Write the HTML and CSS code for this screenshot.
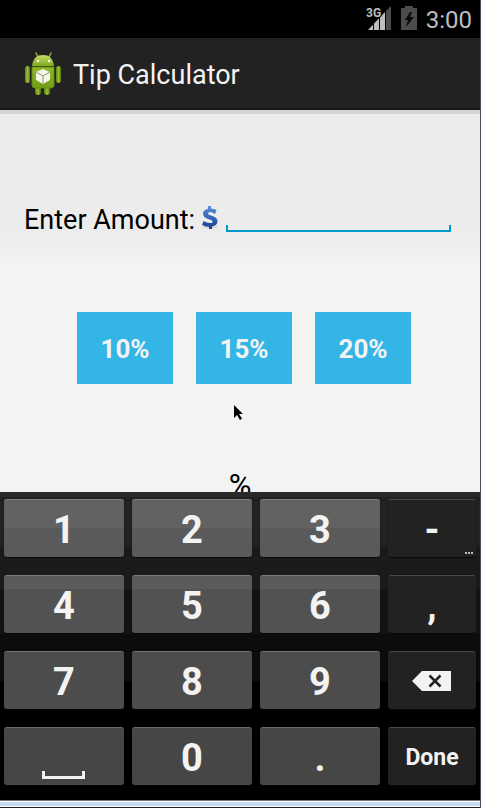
FILE: index.html
```html
<!DOCTYPE html>
<html lang="en">
<head>
<meta charset="utf-8">
<meta name="viewport" content="width=device-width, initial-scale=1">
<title>Tip Calculator</title>
<link rel="stylesheet" href="styles.css">
</head>
<body>
<div class="device">
  <div class="status">
    <svg class="signal" width="26" height="24" viewBox="0 0 26 24" aria-hidden="true">
      <path d="M25 0V24H19V6z" fill="#4c4c4c"/>
      <path d="M2 24L19 6V24z" fill="#bebebe"/>
      <path d="M7.500 17V24M13.500 11V24M19.500 5V24" stroke="#000" stroke-width="1"/>
      <text class="network" x="0" y="11">3G</text>
    </svg>
    <svg class="battery" width="16" height="24" viewBox="0 0 16 24" aria-hidden="true">
      <path d="M4 0H12V2H16V24H0V2H4z" fill="#4c4c4c"/>
      <path d="M9 6L4 14H7L5 21L13 11H9L11 6z" fill="#080808"/>
    </svg>
    <span class="clock">3:00</span>
  </div>
  <header class="appbar">
    <svg width="38" height="44" viewBox="0 0 38 44" aria-hidden="true">
      <defs>
        <linearGradient id="head" x1="0" y1="0" x2="0" y2="1"><stop offset="0" stop-color="#c4dc62"/><stop offset="1" stop-color="#80aa1c"/></linearGradient>
        <linearGradient id="body" x1="0" y1="0" x2="0" y2="1"><stop offset="0" stop-color="#8fb82a"/><stop offset="1" stop-color="#739d16"/></linearGradient>
        <linearGradient id="limb" x1="0" y1="0" x2="1" y2="0"><stop offset="0" stop-color="#5c8210"/><stop offset="0.500" stop-color="#98be34"/><stop offset="1" stop-color="#56780e"/></linearGradient>
      </defs>
      <path d="M12 1L14 5M27 1L25 5" stroke="#8bad2c" stroke-width="1.500" stroke-linecap="round"/>
      <rect x="1" y="14" width="5" height="17" rx="2.500" fill="url(#limb)"/>
      <rect x="32" y="14" width="5" height="17" rx="2.500" fill="url(#limb)"/>
      <rect x="11" y="31" width="6" height="12" rx="3" fill="url(#limb)"/>
      <rect x="20" y="31" width="6" height="12" rx="3" fill="url(#limb)"/>
      <path d="M8 14C9 6 13 3 19 3S29 6 30 14z" fill="url(#head)"/>
      <path d="M8 15H30V33Q30 36 27 36H11Q8 36 8 33z" fill="url(#body)" stroke="#638a12" stroke-width="1"/>
      <circle cx="14" cy="9" r="1.300" fill="#fff"/><circle cx="25" cy="9" r="1.300" fill="#fff"/>
      <path d="M19 17L26 20V28L19 32L12 28V20z" fill="#f4f6ec"/>
      <path d="M12 20L19 24L26 20M19 24V32" fill="none" stroke="#8d9c70" stroke-width="1"/>
    </svg>
    <h1>Tip Calculator</h1>
  </header>
  <main>
    <div class="amount">
      <label for="amount">Enter Amount:</label>
      <svg class="dollar" width="18" height="24" viewBox="0 0 18 24" aria-hidden="true">
        <defs><linearGradient id="blue" x1="0" y1="0" x2="0" y2="1"><stop offset="0" stop-color="#5592d4"/><stop offset="1" stop-color="#183c92"/></linearGradient></defs>
        <ellipse cx="9" cy="21" rx="8" ry="1.500" fill="#d2d4d8"/>
        <path d="M7 0H10V2.500Q13 2.500 15.500 4L14 8Q11 6 9 6T7 7.500Q7 8.800 10 9.500Q16.500 11 16.500 15.500Q16.500 19.500 11 20.500V23H8V20.700Q4 20.700 1 19L2.500 15Q6 17 9 17T11.500 15.500Q11.500 14.300 8 13.300Q2 11.500 2 7.800Q2 4 7 2.800z" fill="url(#blue)"/>
      </svg>
      <div class="field"><input id="amount" type="text" inputmode="decimal"></div>
    </div>
    <div class="tips">
      <button type="button">10%</button>
      <button type="button">15%</button>
      <button type="button">20%</button>
    </div>
    <p class="result">%</p>
    <svg class="pointer" width="10" height="16" viewBox="0 0 10 16" aria-hidden="true"><path d="M0 0L9 9H5L8 13.500L6 15L3 10L0 13z" fill="#000"/></svg>
  </main>
  <div class="keyboard">
    <button type="button" class="key">1</button>
    <button type="button" class="key">2</button>
    <button type="button" class="key">3</button>
    <button type="button" class="key dark">-<span class="more" aria-hidden="true"><i></i><i></i><i></i></span></button>
    <button type="button" class="key second">4</button>
    <button type="button" class="key second">5</button>
    <button type="button" class="key second">6</button>
    <button type="button" class="key dark">,</button>
    <button type="button" class="key third">7</button>
    <button type="button" class="key third">8</button>
    <button type="button" class="key third">9</button>
    <button type="button" class="key dark" aria-label="Delete">
      <svg width="40" height="20" viewBox="0 0 40 20" aria-hidden="true"><path d="M0 10L10 0H39V20H10z" fill="#f3f3f3"/><path d="M17.500 4.500L28.500 15.500M28.500 4.500L17.500 15.500" stroke="#222" stroke-width="2.500"/></svg>
    </button>
    <button type="button" class="key fourth space" aria-label="Space">
      <svg width="44" height="8" viewBox="0 0 44 8" aria-hidden="true"><path d="M1.500 0V6.500H41.500V0" fill="none" stroke="#f3f3f3" stroke-width="3"/></svg>
    </button>
    <button type="button" class="key fourth">0</button>
    <button type="button" class="key fourth">.</button>
    <button type="button" class="key dark done">Done</button>
  </div>
  <div class="frame"></div>
</div>
</body>
</html>
```
FILE: styles.css
```css
* { box-sizing: border-box; }
body { margin: 0; font-family: Roboto, "Liberation Sans", sans-serif; }
button { border: 0; margin: 0; padding: 0; font: inherit; }

.device {
  display: flex;
  flex-direction: column;
  height: 100vh;
  background: #000;
  border-right: 1px solid #444e5a;
  overflow: hidden;
}

.status {
  display: flex;
  justify-content: flex-end;
  align-items: center;
  height: 38px;
  padding-right: 8px;
  gap: 9px;
  color: #bebebe;
}
.signal { overflow: visible; margin-top: -2px; }
.battery { margin-top: -2px; }
.network {
  font: 700 12px Roboto, sans-serif;
  fill: #bebebe;
  stroke: #000;
  stroke-width: 2px;
  paint-order: stroke;
}
.clock { font-size: 24px; line-height: 38px; padding-top: 2px; }

.appbar {
  display: flex;
  align-items: center;
  gap: 11px;
  height: 72px;
  padding: 2px 0 0 24px;
  background: #222;
  border-bottom: 2px solid #1a1a1a;
}
h1 {
  margin: 0;
  padding-top: 2px;
  font-size: 27px;
  line-height: 32px;
  font-weight: 400;
  color: #f3f3f3;
}

main {
  position: relative;
  flex: 1;
  min-height: 0;
  overflow: hidden;
  padding-top: 90px;
  border-top: 4px solid #d4d4d4;
  background: linear-gradient(#ececec 116px, #f3f3f3 150px);
}
.amount {
  display: flex;
  align-items: center;
  padding: 0 29px 0 24px;
  height: 32px;
}
label { font-size: 27px; line-height: 32px; color: #000; }
.dollar { margin: 0 7px 4px 6px; flex: none; }
.field {
  flex: 1;
  align-self: flex-start;
  height: 28px;
  border-bottom: 2px solid #0099cc;
  background:
    linear-gradient(#0099cc, #0099cc) left bottom / 2px 5px no-repeat,
    linear-gradient(#0099cc, #0099cc) right bottom / 2px 5px no-repeat;
}
input {
  display: block;
  width: 100%;
  height: 26px;
  padding: 0 6px;
  border: 0;
  outline: 0;
  background: none;
  font: 24px Roboto, sans-serif;
}
.tips {
  display: flex;
  justify-content: center;
  gap: 23px;
  padding-left: 8px;
  margin-top: 76px;
}
.tips button {
  width: 96px;
  height: 72px;
  padding-top: 2px;
  background: #33b5e5;
  color: #f3f3f3;
  font-size: 26px;
  font-weight: 700;
}
.result {
  margin: 86px 0 0;
  text-align: center;
  font-size: 31px;
  line-height: 32px;
}
.pointer { position: absolute; left: 234px; top: 291px; }

.keyboard {
  display: grid;
  grid-template-columns: 120fr 120fr 120fr 88fr;
  gap: 18px 8px;
  padding: 7px 4px 15px;
  background: linear-gradient(
    #292929 5px, #222 5px 54px, #1b1b1b 54px 97px,
    #121212 97px 142px, #0c0c0c 142px 189px, #000 189px);
}
.key {
  position: relative;
  display: flex;
  align-items: center;
  justify-content: center;
  height: 58px;
  padding-top: 2px;
  border-top: 1px solid #838383;
  border-radius: 3px;
  background: linear-gradient(#626262 28px, #5a5a5a 28px);
  box-shadow: 0 1px 1px #080808;
  color: #f3f3f3;
  font-size: 38px;
  line-height: 44px;
  font-weight: 700;
}
.key > svg { margin-bottom: 2px; }
.second { background: linear-gradient(#5b5b5b 13px, #525252 13px); border-color: #7c7c7c; }
.third { background: #4c4c4c; border-color: #727272; }
.fourth { background: #464646; border-color: #6c6c6c; }
.dark { background: #222; border-color: #4a4a4a; }
.done { font-size: 23px; }
.space { align-items: flex-end; padding-bottom: 4px; }
.more { position: absolute; right: 3px; bottom: 3px; display: flex; gap: 1px; }
.more i { width: 2px; height: 2px; background: #bbb; }

.frame {
  height: 8px;
  background: linear-gradient(#777 1px, #fff 1px 2px, #c3dcf3 2px 6px, #fff 6px 7px, #222 7px);
}
```
